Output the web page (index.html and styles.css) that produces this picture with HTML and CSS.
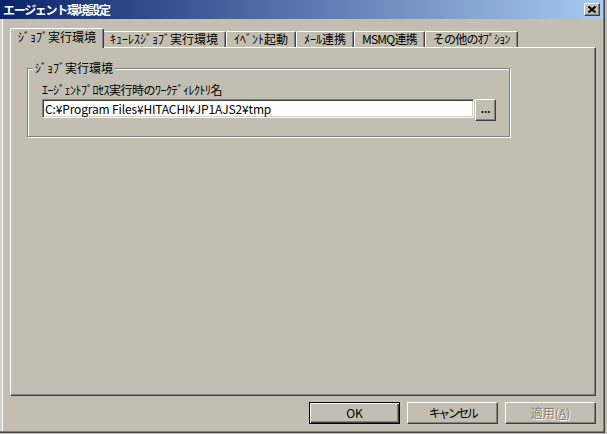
FILE: index.html
```html
<!DOCTYPE html>
<html lang="ja">
<head>
<meta charset="utf-8">
<title>エージェント環境設定</title>
<link rel="stylesheet" href="styles.css">
</head>
<body>
<div class="window">
  <div class="titlebar">
    <span class="title">エージェント環境設定</span>
    <div class="close">
      <svg width="8" height="7" viewBox="0 0 8 7"><path d="M0.5 0.5L7.5 6.5M7.5 0.5L0.5 6.5" stroke="#000" stroke-width="2" fill="none"/></svg>
    </div>
  </div>
  <div class="content">
    <div class="tabs">
      <div class="tab active">ｼﾞｮﾌﾞ実行環境</div>
      <div class="tab">ｷｭｰﾚｽｼﾞｮﾌﾞ実行環境</div>
      <div class="tab">ｲﾍﾞﾝﾄ起動</div>
      <div class="tab">ﾒｰﾙ連携</div>
      <div class="tab tight">MSMQ連携</div>
      <div class="tab tight">その他のｵﾌﾟｼｮﾝ</div>
    </div>
    <div class="panel">
      <div class="group">
        <span class="legend">ｼﾞｮﾌﾞ実行環境</span>
        <div class="label">ｴｰｼﾞｪﾝﾄﾌﾟﾛｾｽ実行時のﾜｰｸﾃﾞｨﾚｸﾄﾘ名</div>
        <div class="field-row">
          <div class="input">C:¥Program Files¥HITACHI¥JP1AJS2¥tmp</div>
          <div class="browse">...</div>
        </div>
      </div>
    </div>
    <div class="buttons">
      <div class="btn default">OK</div>
      <div class="btn kana">キャンセル</div>
      <div class="btn disabled">適用(<u>A</u>)</div>
    </div>
  </div>
</div>
</body>
</html>
```
FILE: styles.css
```css
html, body {
  margin: 0;
  padding: 0;
  background: #c2beb2;
}
body {
  font-family: "Noto Sans CJK JP", "Liberation Sans", sans-serif;
  font-size: 12px;
  color: #000;
}
.window {
  width: 605px;
  height: 433px;
  box-sizing: border-box;
  background: #c2beb2;
  box-shadow: inset -1px -1px 0 #404040, inset -2px -2px 0 #808080, inset 2px 0 0 #d4d0c8, inset 3px 0 0 #fff;
  display: flex;
  flex-direction: column;
}
.titlebar {
  height: 19px;
  margin-right: 2px;
  background: linear-gradient(to right, #0a246a, #a6caf0);
  display: flex;
  align-items: center;
  justify-content: space-between;
  padding: 0 3px 0 3px;
}
.title {
  color: #fff;
  font-weight: bold;
  letter-spacing: -1.3px;
  line-height: 19px;
  white-space: nowrap;
}
.close {
  width: 16px;
  height: 13px;
  box-sizing: border-box;
  background: #c2beb2;
  border: 1px solid;
  border-color: #fff #404040 #404040 #fff;
  box-shadow: inset -1px -1px 0 #808080;
  display: flex;
  align-items: center;
  justify-content: center;
}
.close svg { display: block; }
.content {
  padding: 9px 9px 0 10px;
  display: flex;
  flex-direction: column;
}
.tabs {
  display: flex;
  align-items: flex-end;
  height: 19px;
  padding-left: 2px;
}
.tab {
  height: 16px;
  box-sizing: border-box;
  padding: 0 7px;
  border-top: 1px solid #fff;
  border-left: 1px solid #fff;
  border-right: 1px solid #404040;
  box-shadow: inset -1px 0 0 #808080;
  border-radius: 2px 2px 0 0;
  line-height: 14px;
  white-space: nowrap;
  background: #c2beb2;
}
.tab.tight {
  letter-spacing: -0.8px;
}
.tab.active {
  height: 20px;
  margin: 0 -2px -1px -2px;
  padding: 1px 7px 0;
  position: relative;
  z-index: 1;
}
.panel {
  height: 349px;
  box-sizing: border-box;
  border-top: 1px solid #fff;
  border-left: 1px solid #fff;
  border-right: 1px solid #404040;
  border-bottom: 1px solid #404040;
  box-shadow: inset -1px -1px 0 #808080;
  padding: 20px 0 0 16px;
}
.group {
  position: relative;
  width: 483px;
  height: 69px;
  box-sizing: border-box;
  border: 1px solid #808080;
  box-shadow: inset 1px 1px 0 #fff, 1px 1px 0 #fff;
  padding: 14px 0 0 14px;
}
.legend {
  position: absolute;
  left: 5px;
  top: -8px;
  padding: 0 2px;
  background: #c2beb2;
  line-height: 14px;
  white-space: nowrap;
}
.label {
  line-height: 14px;
  margin-bottom: 2px;
  letter-spacing: -0.5px;
  white-space: nowrap;
}
.field-row {
  display: flex;
  align-items: flex-start;
}
.input {
  width: 432px;
  height: 19px;
  box-sizing: border-box;
  background: #fff;
  border: 1px solid;
  border-color: #808080 #fff #fff #808080;
  box-shadow: inset 1px 1px 0 #404040, inset -1px -1px 0 #d4d0c8;
  padding: 1px 2px;
  line-height: 15px;
  letter-spacing: -0.15px;
  white-space: nowrap;
  overflow: hidden;
}
.browse {
  width: 21px;
  height: 22px;
  margin-left: 1px;
  box-sizing: border-box;
  border: 1px solid;
  border-color: #fff #404040 #404040 #fff;
  box-shadow: inset -1px -1px 0 #808080;
  text-align: center;
  line-height: 17px;
  font-size: 10px;
  font-weight: bold;
}
.buttons {
  display: flex;
  justify-content: flex-end;
  gap: 7px;
  margin-top: 6px;
}
.btn {
  width: 91px;
  height: 22px;
  box-sizing: border-box;
  border: 1px solid;
  border-color: #fff #404040 #404040 #fff;
  box-shadow: inset -1px -1px 0 #808080;
  text-align: center;
  line-height: 19px;
  white-space: nowrap;
}
.btn.kana {
  letter-spacing: -2.5px;
}
.btn.default {
  border-color: #000;
  box-shadow: inset 1px 1px 0 #fff, inset -1px -1px 0 #404040, inset -2px -2px 0 #808080;
}
.btn.disabled {
  color: #808080;
  text-shadow: 1px 1px 0 #fff;
}
```
